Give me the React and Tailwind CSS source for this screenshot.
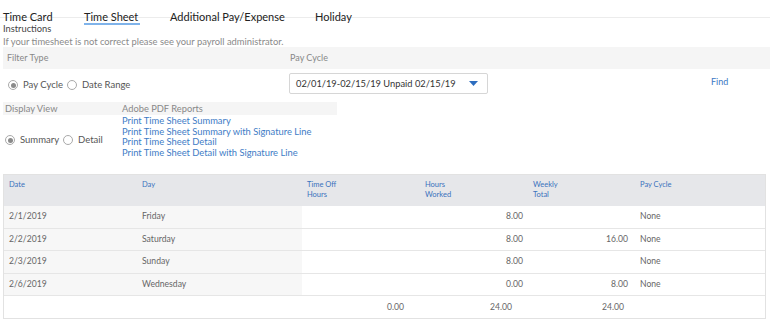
import React from 'react';

const tabs = [
  { label: 'Time Card', w: 'w-[81px]' },
  { label: 'Time Sheet', w: 'w-[86px]', active: true },
  { label: 'Additional Pay/Expense', w: 'w-[145px]' },
  { label: 'Holiday', w: 'w-[60px]' },
];

const reports = [
  'Print Time Sheet Summary',
  'Print Time Sheet Summary with Signature Line',
  'Print Time Sheet Detail',
  'Print Time Sheet Detail with Signature Line',
];

const rows = [
  { date: '2/1/2019', day: 'Friday', worked: '8.00', weekly: '', cycle: 'None' },
  { date: '2/2/2019', day: 'Saturday', worked: '8.00', weekly: '16.00', cycle: 'None' },
  { date: '2/3/2019', day: 'Sunday', worked: '8.00', weekly: '', cycle: 'None' },
  { date: '2/6/2019', day: 'Wednesday', worked: '0.00', weekly: '8.00', cycle: 'None' },
];

const cols = 'grid grid-cols-[133px_165px_118px_108px_107px_1fr]';

function Radio({ checked, label }) {
  return (
    <div className="flex items-center">
      <span className="w-[10px] h-[10px] rounded-full border border-[#a9a9a9] flex items-center justify-center">
        {checked && <span className="w-[5px] h-[5px] rounded-full bg-[#8a8a8a]" />}
      </span>
      <span className="ml-[5px] text-[9.5px] text-[#555]">{label}</span>
    </div>
  );
}

export default function App() {
  return (
    <div className="w-[770px] h-[322px] bg-white overflow-hidden font-['Lato','Liberation_Sans',sans-serif]">
      {/* Tabs */}
      <div className="flex h-[18px] pl-[3px] border-b border-[#ececec]">
        {tabs.map((t) => (
          <div key={t.label} className={`${t.w} pt-[3px]`}>
            <span
              className={`inline-block text-[11px] leading-[13px] text-[#222] ${
                t.active ? 'border-b-2 border-[#7fb3ea] pr-[2px]' : ''
              }`}
            >
              {t.label}
            </span>
          </div>
        ))}
      </div>

      {/* Instructions */}
      <div className="pl-[3px] pt-[5px] text-[9.3px] leading-[12px] text-[#444]">Instructions</div>
      <div className="pl-[3px] mt-[2px] text-[9.4px] leading-[10px] text-[#8a8a8a]">
        If your timesheet is not correct please see your payroll administrator.
      </div>

      {/* Filter band */}
      <div className="ml-[3px] h-[22px] bg-[#f5f5f5] flex items-center text-[9px] text-[#888]">
        <span className="w-[287px] pl-[4px]">Filter Type</span>
        <span>Pay Cycle</span>
      </div>

      <div className="flex h-[33px]">
        <div className="w-[289px] pl-[8px] flex items-center gap-[4px] pb-[1px]">
          <Radio checked label="Pay Cycle" />
          <Radio label="Date Range" />
        </div>
        <div className="w-[199px] h-[21px] mt-[4px] border border-[#d6d6d6] rounded-[2px] flex items-center justify-between pl-[6px] pr-[9px]">
          <span className="text-[9.3px] text-[#333]">02/01/19-02/15/19 Unpaid 02/15/19</span>
          <svg width="9" height="5" viewBox="0 0 9 5">
            <path d="M0 0 L9 0 L4.5 5 Z" fill="#2d6dbf" />
          </svg>
        </div>
        <div className="ml-[223px] pt-[6px] text-[9px] text-[#3a78c4]">Find</div>
      </div>

      {/* Display view band */}
      <div className="ml-[3px] w-[334px] h-[13px] bg-[#f5f5f5] flex items-center text-[9.3px] text-[#888]">
        <span className="w-[119px] pl-[2px]">Display View</span>
        <span>Adobe PDF Reports</span>
      </div>

      <div className="flex h-[59px] pt-[1px]">
        <div className="w-[122px] pl-[5px] flex items-start pt-[17px] gap-[4px]">
          <Radio checked label="Summary" />
          <Radio label="Detail" />
        </div>
        <div className="flex flex-col text-[9.35px] leading-[10.7px] text-[#3e7cc6]">
          {reports.map((r) => (
            <span key={r}>{r}</span>
          ))}
        </div>
      </div>

      {/* Table */}
      <div className="ml-[3px] w-[763px] border border-[#e2e2e2] text-[8.6px]">
        <div className={`${cols} h-[31px] bg-[#e6e7ea] text-[7.5px] leading-[10px] text-[#3a72bd]`}>
          <div className="pl-[5px] pt-[5px]">Date</div>
          <div className="pl-[5px] pt-[5px]">Day</div>
          <div className="pl-[5px] pt-[5px]">Time Off<br />Hours</div>
          <div className="pl-[5px] pt-[5px]">Hours<br />Worked</div>
          <div className="pl-[5px] pt-[5px]">Weekly<br />Total</div>
          <div className="pl-[5px] pt-[5px]">Pay Cycle</div>
        </div>
        {rows.map((r) => (
          <div key={r.date} className={`${cols} h-[22.5px] border-b-[1.5px] border-[#e6e6e6] text-[#666]`}>
            <div className="bg-[#f7f7f7] pl-[5px] flex items-center">{r.date}</div>
            <div className="bg-[#f7f7f7] pl-[5px] flex items-center">{r.day}</div>
            <div />
            <div className="flex items-center justify-end pr-[5px]">{r.worked}</div>
            <div className="flex items-center justify-end pr-[7px]">{r.weekly}</div>
            <div className="pl-[5px] flex items-center">{r.cycle}</div>
          </div>
        ))}
        <div className={`${cols} h-[22px] text-[#666]`}>
          <div />
          <div />
          <div className="flex items-center justify-end pr-[16px]">0.00</div>
          <div className="flex items-center justify-end pr-[16px]">24.00</div>
          <div className="flex items-center justify-end pr-[11px]">24.00</div>
          <div />
        </div>
      </div>
    </div>
  );
}
